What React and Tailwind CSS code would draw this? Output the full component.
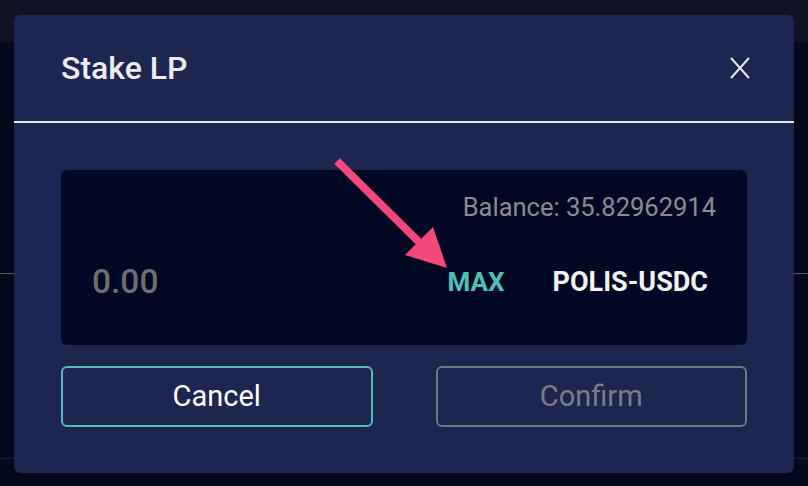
import React from "react";

const font = { fontFamily: "Roboto, 'Liberation Sans', sans-serif" };

const App = () => {
    return (
        <div className="relative w-full h-screen overflow-hidden bg-[#040a1c]" style={font}>
            {/* page behind the modal */}
            <div className="h-[42px] bg-[#0e1223]"></div>
            <div className="h-[231px]"></div>
            <div className="h-px bg-[#5a5d68]"></div>
            <div className="h-[184px]"></div>
            <div className="h-px bg-[#1a2036]"></div>

            {/* modal */}
            <div className="absolute left-[14px] top-[15px] w-[780px] h-[458px] bg-[#1c2650] rounded-md flex flex-col">
                <div className="h-[106px] px-[47px] flex items-center justify-between">
                    <h2 className="text-[32px] font-medium text-[#ececec]">Stake LP</h2>
                    <svg width="22" height="22" viewBox="0 0 22 22" className="mr-[-4px]">
                        <path d="M2 1 L20 21 M20 1 L2 21" stroke="#e8e8e8" strokeWidth="2" />
                    </svg>
                </div>
                <div className="h-[2px] bg-[#e6e6e6]"></div>

                <div className="px-[47px] pt-[47px]">
                    <div className="h-[175px] bg-[#020824] rounded-md px-[31px] flex flex-col">
                        <div className="pt-[23px] text-right text-[25.5px] text-[#8b8b8e] leading-[28px]">
                            Balance: 35.82962914
                        </div>
                        <div className="mt-[36px] flex items-center">
                            <div className="text-[33.5px] text-[#6e6e72] font-medium flex-1">0.00</div>
                            <div className="text-[26px] font-bold text-[#4ec1b7] mr-[48px]">MAX</div>
                            <div className="text-[27px] font-bold text-[#f2f2f2] mr-[8px]">POLIS-USDC</div>
                        </div>
                    </div>
                </div>

                <div className="px-[47px] pt-[21px] flex gap-[63px]">
                    <button className="flex-1 h-[61px] rounded-md border-2 border-[#4ec1b7] text-[29px] text-white">
                        Cancel
                    </button>
                    <button className="flex-1 h-[61px] rounded-md border-2 border-[#76767d] text-[29px] text-[#7c7c82]">
                        Confirm
                    </button>
                </div>
            </div>

            {/* annotation arrow */}
            <svg className="absolute left-0 top-0 pointer-events-none" width="808" height="486">
                <line x1="337" y1="161" x2="420" y2="243" stroke="#f4477a" strokeWidth="8" strokeLinecap="butt" />
                <polygon points="447,268 405,255 433,227" fill="#f4477a" />
            </svg>
        </div>
    );
};

export default App;
